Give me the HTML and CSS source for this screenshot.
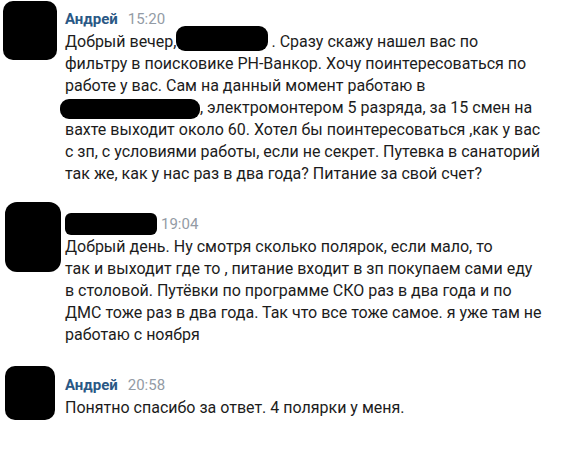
FILE: index.html
```html
<!DOCTYPE html>
<html lang="ru">
<head>
<meta charset="utf-8">
<link rel="stylesheet" href="styles.css">
</head>
<body>
<div class="chat">
  <div class="msg msg-1">
    <div class="avatar-col"><div class="avatar avatar-1"></div></div>
    <div class="content">
      <div class="head"><span class="name">Андрей</span><span class="time">15:20</span></div>
      <div class="text">Добрый вечер,<span class="redact redact-a"></span>. Сразу скажу нашел вас по<br>фильтру в поисковике РН-Ванкор. Хочу поинтересоваться по<br>работе у вас. Сам на данный момент работаю в<br><span class="redact redact-b"></span>, электромонтером 5 разряда, за 15 смен на<br>вахте выходит около 60. Хотел бы поинтересоваться ,как у вас<br>с зп, с условиями работы, если не секрет. Путевка в санаторий<br>так же, как у нас раз в два года? Питание за свой счет?</div>
    </div>
  </div>
  <div class="msg msg-2">
    <div class="avatar-col"><div class="avatar avatar-2"></div></div>
    <div class="content">
      <div class="head"><span class="redact redact-name"></span><span class="time">19:04</span></div>
      <div class="text">Добрый день. Ну смотря сколько полярок, если мало, то<br>так и выходит где то , питание входит в зп покупаем сами еду<br>в столовой. Путёвки по программе СКО раз в два года и по<br>ДМС тоже раз в два года. Так что все тоже самое. я уже там не<br>работаю с ноября</div>
    </div>
  </div>
  <div class="msg msg-3">
    <div class="avatar-col"><div class="avatar avatar-3"></div></div>
    <div class="content">
      <div class="head"><span class="name">Андрей</span><span class="time">20:58</span></div>
      <div class="text">Понятно спасибо за ответ. 4 полярки у меня.</div>
    </div>
  </div>
</div>
</body>
</html>
```
FILE: styles.css
```css
html, body {
  margin: 0;
  padding: 0;
  background: #ffffff;
}
body {
  font-family: Roboto, "Noto Sans", sans-serif;
  color: #1c1c1c;
}
.chat {
  display: flex;
  flex-direction: column;
  padding-top: 7px;
  gap: 27px;
}
.msg {
  display: grid;
  grid-template-columns: 65px 1fr;
}
.avatar {
  background: #000;
  border-radius: 10px;
}
.avatar-1 {
  width: 54px;
  height: 59px;
  margin: -6px 0 0 3px;
}
.avatar-2 {
  width: 56px;
  height: 70px;
  margin: -10px 0 0 5px;
  border-radius: 12px;
}
.avatar-3 {
  width: 50px;
  height: 54px;
  margin: -7px 0 0 5px;
}
.head {
  display: flex;
  align-items: center;
  height: 24px;
  gap: 10px;
}
.name {
  font-weight: 700;
  font-size: 15px;
  color: #2a5885;
}
.time {
  font-size: 15px;
  color: #939ba5;
}
.text {
  font-size: 16px;
  line-height: 22px;
  white-space: nowrap;
}
.redact {
  display: inline-block;
  background: #000;
  border-radius: 9px;
  vertical-align: middle;
}
.redact-a {
  width: 92px;
  height: 25px;
  margin: -6px 3px 2px 0;
}
.redact-b {
  width: 140px;
  height: 20px;
  margin: -1px 0 -1px -5px;
}
.redact-name {
  width: 92px;
  height: 22px;
  border-radius: 6px;
  margin-right: -6px;
}
```
